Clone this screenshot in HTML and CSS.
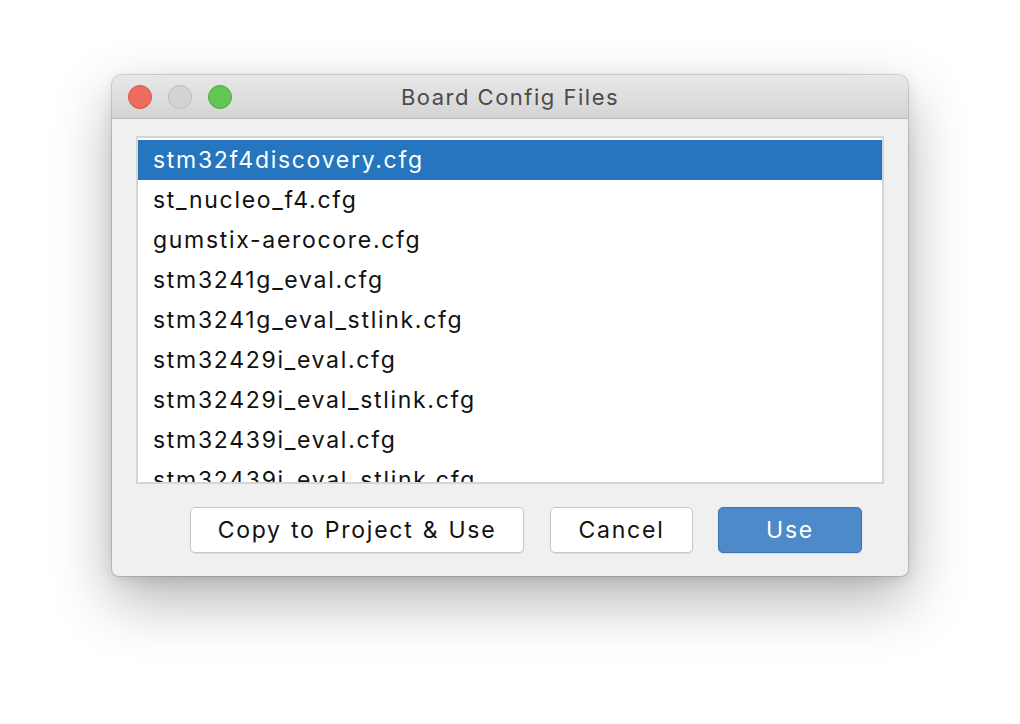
FILE: index.html
```html
<!DOCTYPE html>
<html>
<head>
<meta charset="utf-8">
<link rel="stylesheet" href="styles.css">
</head>
<body>
<div class="stage">
  <div class="window">
    <div class="titlebar">
      <div class="lights">
        <span class="light red"></span>
        <span class="light gray"></span>
        <span class="light green"></span>
      </div>
      <div class="title">Board Config Files</div>
    </div>
    <div class="content">
      <div class="list">
        <div class="row selected">stm32f4discovery.cfg</div>
        <div class="row">st_nucleo_f4.cfg</div>
        <div class="row">gumstix-aerocore.cfg</div>
        <div class="row">stm3241g_eval.cfg</div>
        <div class="row">stm3241g_eval_stlink.cfg</div>
        <div class="row">stm32429i_eval.cfg</div>
        <div class="row">stm32429i_eval_stlink.cfg</div>
        <div class="row">stm32439i_eval.cfg</div>
        <div class="row">stm32439i_eval_stlink.cfg</div>
      </div>
      <div class="buttons">
        <button class="btn copy">Copy to Project &amp; Use</button>
        <button class="btn cancel">Cancel</button>
        <button class="btn primary">Use</button>
      </div>
    </div>
  </div>
</div>
</body>
</html>
```
FILE: styles.css
```css
html, body {
  margin: 0;
  padding: 0;
  background: #ffffff;
}
body {
  width: 1020px;
  height: 724px;
  overflow: hidden;
  font-family: "Inter", "Roboto", "Liberation Sans", sans-serif;
}
.stage {
  padding: 75px 0 0 112px;
}
.window {
  width: 796px;
  height: 501px;
  box-sizing: border-box;
  background: #f0f0f0;
  border-radius: 10px 10px 7px 7px;
  box-shadow: 0 0 0 1px rgba(0,0,0,0.14), 0 24px 60px rgba(0,0,0,0.30), 0 4px 14px rgba(0,0,0,0.10);
  display: flex;
  flex-direction: column;
  overflow: hidden;
}
.titlebar {
  height: 44px;
  flex: none;
  box-sizing: border-box;
  background: linear-gradient(#e9e8e9, #d4d4d4);
  border-bottom: 1px solid #b9b9b9;
  position: relative;
  display: flex;
  align-items: center;
  justify-content: center;
}
.lights {
  position: absolute;
  left: 16px;
  top: 10px;
  display: flex;
  gap: 16px;
}
.light {
  width: 24px;
  height: 24px;
  box-sizing: border-box;
  border-radius: 50%;
  display: block;
}
.red { background: #ee6b5f; border: 1px solid #d1524a; }
.gray { background: #d3d3d3; border: 1px solid #bcbcbc; }
.green { background: #62c655; border: 1px solid #50a840; }
.title {
  font-size: 22px;
  color: #4b4b4b;
  letter-spacing: 1.5px;
  padding-top: 1px;
}
.content {
  padding: 17px 24px 0 24px;
  display: flex;
  flex-direction: column;
}
.list {
  height: 348px;
  box-sizing: border-box;
  border: 2px solid #d5d5d5;
  background: #ffffff;
  padding-top: 2px;
  overflow: hidden;
}
.row {
  height: 40px;
  line-height: 41px;
  padding-left: 15px;
  font-size: 23px;
  letter-spacing: 1.7px;
  color: #111111;
  white-space: nowrap;
}
.row.selected {
  background: #2675bf;
  color: #ffffff;
}
.buttons {
  margin-top: 23px;
  display: flex;
  justify-content: flex-end;
  gap: 25px;
  padding-right: 22px;
}
.btn {
  height: 46px;
  box-sizing: border-box;
  border-radius: 5px;
  font-family: inherit;
  font-size: 23px;
  letter-spacing: 1.75px;
  word-spacing: 1px;
  color: #111111;
  background: #ffffff;
  border: 1px solid #c6c6c6;
  box-shadow: 0 1px 1px rgba(0,0,0,0.08);
  padding: 0;
}
.copy { width: 334px; }
.cancel { width: 143px; margin-left: 1px; }
.primary {
  width: 144px;
  background: #4e89ca;
  border: 1px solid #3b72b3;
  color: #ffffff;
}
```
